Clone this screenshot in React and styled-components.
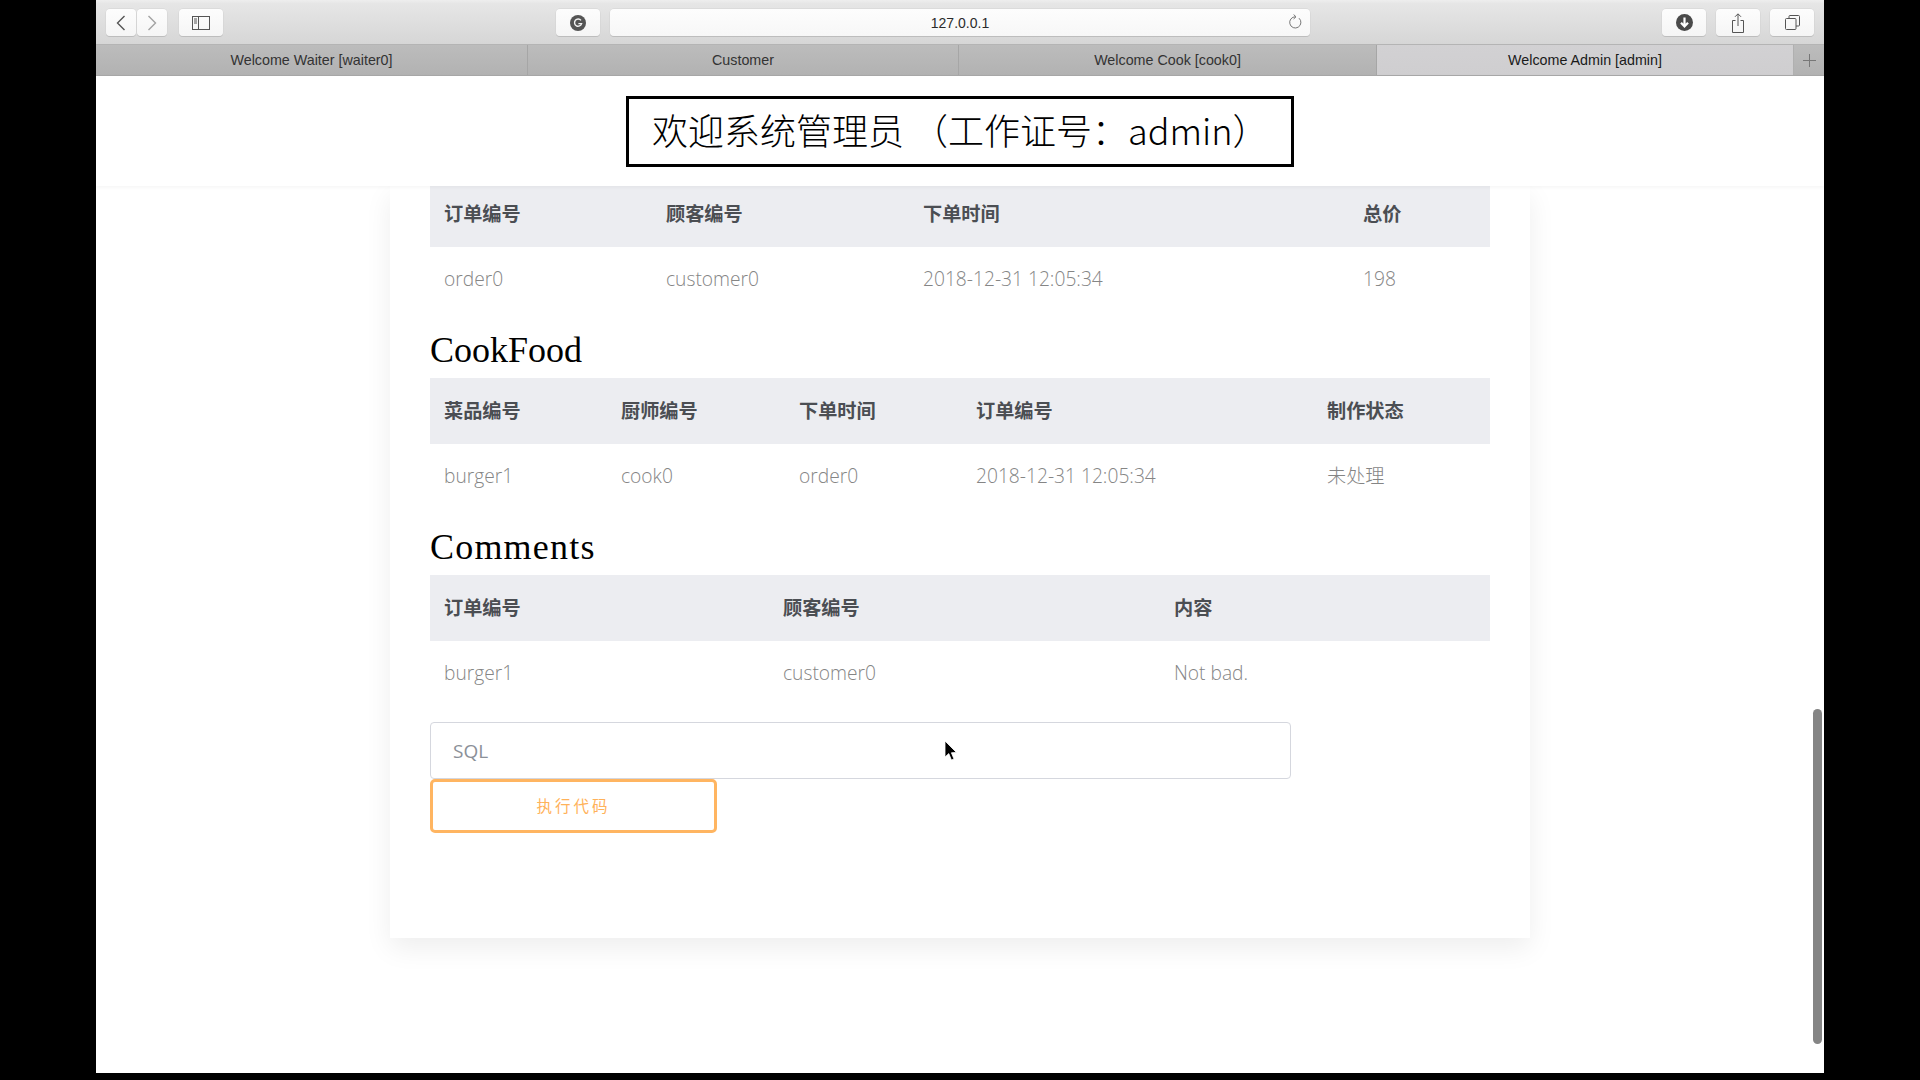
import styled, { createGlobalStyle } from 'styled-components';

const GlobalStyle = createGlobalStyle`
  html, body {
    margin: 0;
    padding: 0;
    height: 100%;
    background: #000;
    overflow: hidden;
  }
`;

const BrowserWindow = styled.div`
  position: relative;
  width: 1728px;
  height: 1073px;
  margin-left: 96px;
  background: #fff;
  display: flex;
  flex-direction: column;
  overflow: hidden;
`;

const Toolbar = styled.div`
  height: 45px;
  box-sizing: border-box;
  flex: none;
  display: flex;
  align-items: center;
  padding: 1px 10px 0;
  background: linear-gradient(#eeeeee, #e6e6e6 8%, #d6d6d6);
  border-bottom: 1px solid #b4b4b4;
`;

const ToolGroup = styled.div`
  display: flex;
  align-items: center;
  gap: ${(p) => p.$gap || 10}px;
  margin-left: ${(p) => p.$left || 0}px;
  margin-right: ${(p) => (p.$pushRight ? 'auto' : '0')};
`;

const ToolButton = styled.div`
  width: ${(p) => p.$w || 44}px;
  height: 27px;
  box-sizing: border-box;
  margin-right: ${(p) => p.$after || 0}px;
  display: flex;
  align-items: center;
  justify-content: center;
  background: linear-gradient(#fdfdfd, #f5f5f5);
  border-radius: 4px;
  box-shadow: 0 1px 0 #bdbdbd, 0 0 0 0.5px #d2d2d2;
  color: ${(p) => p.$color || '#555'};
`;

const AddressBar = styled.div`
  position: relative;
  width: 700px;
  height: 27px;
  display: flex;
  align-items: center;
  justify-content: center;
  background: linear-gradient(#fdfdfd, #f7f7f7);
  border-radius: 4px;
  box-shadow: 0 1px 0 #bdbdbd, 0 0 0 0.5px #d2d2d2;
  font: 14px 'Liberation Sans', Arial, sans-serif;
  color: #2b2b2b;
`;

const ReloadIcon = styled.svg`
  position: absolute;
  right: 8px;
  top: 5px;
  color: #777;
`;

const TabBar = styled.div`
  height: 31px;
  flex: none;
  display: flex;
  background: linear-gradient(#bcbcbc, #b2b2b2);
  border-bottom: 1px solid #a9a9a9;
  box-sizing: border-box;
`;

const Tab = styled.div`
  width: ${(p) => p.$w}px;
  flex: none;
  box-sizing: border-box;
  display: flex;
  align-items: center;
  justify-content: center;
  font: 14.3px 'Liberation Sans', Arial, sans-serif;
  color: ${(p) => (p.$active ? '#1a1a1a' : '#333')};
  background: ${(p) => (p.$active ? 'linear-gradient(#d2d1d3, #cfced0)' : 'transparent')};
  border-right: 1px solid ${(p) => (p.$active ? '#b0b0b0' : '#a6a6a6')};
`;

const NewTab = styled.div`
  flex: 1;
  display: flex;
  align-items: center;
  justify-content: center;
  color: #777;
`;

const Header = styled.header`
  position: relative;
  z-index: 2;
  height: 110px;
  flex: none;
  display: flex;
  align-items: center;
  justify-content: center;
  background: #fff;
  box-shadow: 0 1px 4px rgba(0, 0, 0, 0.05);
`;

const TitleBox = styled.h1`
  width: 668px;
  height: 71px;
  margin: 0;
  box-sizing: border-box;
  display: flex;
  align-items: center;
  padding: 0 0 5px 23px;
  border: 3px solid #000;
  font: 300 36px 'Noto Sans CJK SC', 'Open Sans', sans-serif;
  color: #000;
  white-space: nowrap;
`;

const Content = styled.main`
  flex: 1;
  overflow: hidden;
  display: flex;
  justify-content: center;
`;

const Card = styled.section`
  width: 1140px;
  height: 752px;
  box-sizing: border-box;
  padding: 0 40px;
  background: #fff;
  box-shadow: 0 10px 26px rgba(0, 0, 0, 0.07);
`;

const DataTable = styled.table`
  width: 100%;
  table-layout: fixed;
  border-collapse: collapse;
  margin-top: ${(p) => p.$top || 0}px;
`;

const Col = styled.col`
  width: ${(p) => p.$w}px;
`;

const HeadCell = styled.th`
  height: 66px;
  padding: 0 0 3px 14px;
  box-sizing: border-box;
  background: #ecedf1;
  text-align: left;
  font: 700 19.2px 'Noto Sans CJK SC', 'Open Sans', sans-serif;
  color: #4b4e53;
`;

const DataCell = styled.td`
  height: 66px;
  padding: 0 0 4px 14px;
  box-sizing: border-box;
  font: 300 19.2px 'Open Sans', 'Noto Sans CJK SC', sans-serif;
  color: #858585;
`;

const SectionTitle = styled.h2`
  height: 65px;
  margin: 0;
  font: 400 36px/74px 'Liberation Serif', serif;
  letter-spacing: ${(p) => p.$tracking || 0}px;
  color: #000;
`;

const SqlForm = styled.form`
  display: flex;
  flex-direction: column;
  align-items: flex-start;
  margin-top: 15px;
`;

const SqlInput = styled.input`
  width: 861px;
  height: 57px;
  box-sizing: border-box;
  padding: 0 22px;
  border: 1.5px solid #d5d7de;
  border-radius: 4px;
  outline: none;
  background: #fff;
  font: 400 19px 'Open Sans', sans-serif;
  color: #555;

  &::placeholder {
    color: #8b9098;
    opacity: 1;
  }
`;

const RunButton = styled.button`
  width: 287px;
  height: 54px;
  box-sizing: border-box;
  padding: 0 0 3px;
  border: 3px solid #ffb561;
  border-radius: 5px;
  background: #fff;
  font: 400 15.5px 'Noto Sans CJK SC', sans-serif;
  letter-spacing: 3px;
  color: #ffb25a;
`;

const ScrollThumb = styled.div`
  position: absolute;
  right: 2px;
  top: 709px;
  width: 9px;
  height: 335px;
  border-radius: 5px;
  background: #858585;
`;

const Pointer = styled.svg`
  position: absolute;
  left: 848px;
  top: 740px;
`;

const tables = [
  {
    title: null,
    cols: [222, 257, 440, 141],
    head: ['订单编号', '顾客编号', '下单时间', '总价'],
    row: ['order0', 'customer0', '2018-12-31 12:05:34', '198'],
  },
  {
    title: 'CookFood',
    cols: [177, 178, 177, 351, 177],
    head: ['菜品编号', '厨师编号', '下单时间', '订单编号', '制作状态'],
    row: ['burger1', 'cook0', 'order0', '2018-12-31 12:05:34', '未处理'],
  },
  {
    title: 'Comments',
    tracking: 1.2,
    cols: [339, 391, 330],
    head: ['订单编号', '顾客编号', '内容'],
    row: ['burger1', 'customer0', 'Not bad.'],
  },
];

const tabs = [
  { label: 'Welcome Waiter [waiter0]', w: 432 },
  { label: 'Customer', w: 431 },
  { label: 'Welcome Cook [cook0]', w: 418 },
  { label: 'Welcome Admin [admin]', w: 417, active: true },
];

const Chevron = ({ dir, color }) => (
  <svg width="10" height="16" viewBox="0 0 10 16" fill="none" stroke={color} strokeWidth="1.4">
    <path d={dir === 'left' ? 'M8.5 1 L1.5 8 L8.5 15' : 'M1.5 1 L8.5 8 L1.5 15'} />
  </svg>
);

const SidebarIcon = () => (
  <svg width="18" height="14" viewBox="0 0 18 14" fill="none" stroke="#555" strokeWidth="1">
    <rect x="0.5" y="0.5" width="17" height="13" />
    <path d="M6.5 0.5 V13.5" />
    <path d="M2 3 H5 M2 5 H5 M2 7 H5" />
  </svg>
);

const GrammarlyIcon = () => (
  <svg width="16" height="16" viewBox="0 0 16 16">
    <circle cx="8" cy="8" r="8" fill="#555" />
    <path d="M11 5.4 A3.6 3.6 0 1 0 11.6 8.6 H8.4" fill="none" stroke="#f4f4f4" strokeWidth="1.4" />
  </svg>
);

const DownloadIcon = () => (
  <svg width="17" height="17" viewBox="0 0 17 17">
    <circle cx="8.5" cy="8.5" r="8.5" fill="#4a4a4a" />
    <path d="M8.5 3.5 V12 M5 8.8 L8.5 12.5 L12 8.8" fill="none" stroke="#fff" strokeWidth="2.2" />
  </svg>
);

const ShareIcon = () => (
  <svg width="14" height="20" viewBox="0 0 14 20" fill="none" stroke="#555" strokeWidth="1">
    <path d="M4.5 7.5 H1.5 V19.5 H12.5 V7.5 H9.5" />
    <path d="M7 13 V1 M4 3.8 L7 0.8 L10 3.8" />
  </svg>
);

const TabsIcon = () => (
  <svg width="15" height="15" viewBox="0 0 15 15" fill="none" stroke="#555" strokeWidth="1">
    <rect x="0.5" y="3.5" width="10.5" height="11" rx="1" />
    <path d="M4 3.5 V1.5 A1 1 0 0 1 5 0.5 H13.5 A1 1 0 0 1 14.5 1.5 V10 A1 1 0 0 1 13.5 11 H11" />
  </svg>
);

const App = () => {
  return (
    <>
      <GlobalStyle />
      <BrowserWindow>
        <Toolbar>
          <ToolGroup $gap={1}>
            <ToolButton $w={30}><Chevron dir="left" color="#555" /></ToolButton>
            <ToolButton $w={30} $after={11}><Chevron dir="right" color="#a2a2a2" /></ToolButton>
            <ToolButton $w={44}><SidebarIcon /></ToolButton>
          </ToolGroup>
          <ToolGroup $left={333} $pushRight>
            <ToolButton><GrammarlyIcon /></ToolButton>
            <AddressBar>
              127.0.0.1
              <ReloadIcon width="14" height="16" viewBox="0 0 14 16" fill="none" stroke="currentColor" strokeWidth="1">
                <path d="M7.5 2.8 A5.6 5.6 0 1 0 11 4.2" />
                <path d="M5.6 0.5 L8 2.8 L5.6 5" />
              </ReloadIcon>
            </AddressBar>
          </ToolGroup>
          <ToolGroup>
            <ToolButton><DownloadIcon /></ToolButton>
            <ToolButton><ShareIcon /></ToolButton>
            <ToolButton><TabsIcon /></ToolButton>
          </ToolGroup>
        </Toolbar>

        <TabBar>
          {tabs.map((tab) => (
            <Tab key={tab.label} $w={tab.w} $active={tab.active}>{tab.label}</Tab>
          ))}
          <NewTab>
            <svg width="13" height="13" viewBox="0 0 13 13" stroke="currentColor" strokeWidth="1">
              <path d="M6.5 0 V13 M0 6.5 H13" />
            </svg>
          </NewTab>
        </TabBar>

        <Header>
          <TitleBox>欢迎系统管理员 （工作证号：admin）</TitleBox>
        </Header>

        <Content>
          <Card>
            {tables.map((table, i) => (
              <div key={i}>
                {table.title && <SectionTitle $tracking={table.tracking}>{table.title}</SectionTitle>}
                <DataTable $top={i === 0 ? -5 : 0}>
                  <colgroup>
                    {table.cols.map((w, j) => <Col key={j} $w={w} />)}
                  </colgroup>
                  <thead>
                    <tr>
                      {table.head.map((h) => <HeadCell key={h}>{h}</HeadCell>)}
                    </tr>
                  </thead>
                  <tbody>
                    <tr>
                      {table.row.map((c, j) => <DataCell key={j}>{c}</DataCell>)}
                    </tr>
                  </tbody>
                </DataTable>
              </div>
            ))}
            <SqlForm>
              <SqlInput placeholder="SQL" />
              <RunButton type="button">执行代码</RunButton>
            </SqlForm>
          </Card>
        </Content>

        <ScrollThumb />
        <Pointer width="14" height="22" viewBox="0 0 14 22">
          <path d="M1 1 V17 L4.8 13.6 L7.4 20 L10 19 L7.4 12.8 L12.4 12.4 Z" fill="#000" stroke="#fff" strokeWidth="0.8" />
        </Pointer>
      </BrowserWindow>
    </>
  );
};

export default App;
